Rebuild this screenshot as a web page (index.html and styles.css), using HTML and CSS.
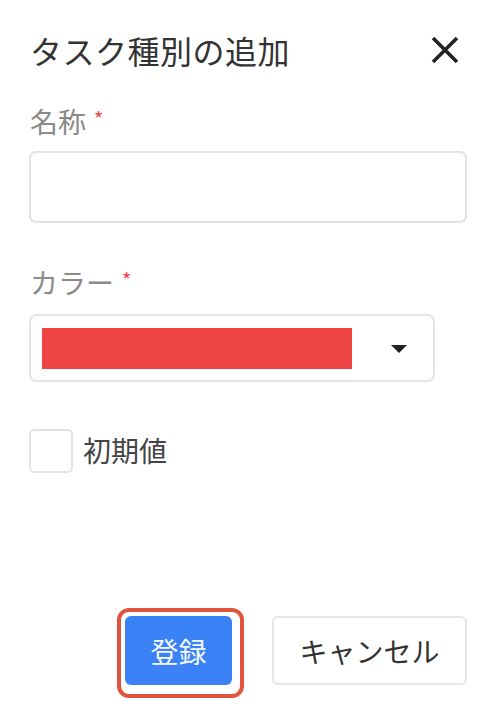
FILE: index.html
```html
<!DOCTYPE html>
<html lang="ja">
<head>
<meta charset="utf-8">
<title>タスク種別の追加</title>
<link rel="stylesheet" href="styles.css">
</head>
<body>
<div class="dialog">
  <div class="header">
    <h1 class="title">タスク種別の追加</h1>
    <button class="close" aria-label="閉じる">
      <svg width="28" height="28" viewBox="0 0 28 28"><path d="M2 2 L26 26 M26 2 L2 26" stroke="#222" stroke-width="3.6" stroke-linecap="butt"/></svg>
    </button>
  </div>

  <div class="field field-name">
    <label class="label">名称<span class="req">*</span></label>
    <input class="input" type="text">
  </div>

  <div class="field field-color">
    <label class="label">カラー<span class="req">*</span></label>
    <div class="select">
      <div class="swatch"></div>
      <svg class="caret" width="16" height="8" viewBox="0 0 16 8"><path d="M0 0 H16 L8 8 Z" fill="#222"/></svg>
    </div>
  </div>

  <div class="check-row">
    <span class="checkbox"></span>
    <span class="check-label">初期値</span>
  </div>

  <div class="actions">
    <button class="btn btn-primary">登録</button>
    <button class="btn btn-secondary">キャンセル</button>
  </div>
</div>
</body>
</html>
```
FILE: styles.css
```css
* { box-sizing: border-box; }
html, body { margin: 0; padding: 0; background: #fff; }
body {
  font-family: "Noto Sans CJK JP", "Noto Sans", sans-serif;
  width: 503px;
  height: 719px;
  overflow: hidden;
}
.dialog {
  display: flex;
  flex-direction: column;
  padding: 34px 36px 0 29px;
}
.header {
  display: flex;
  align-items: center;
  justify-content: space-between;
  height: 32px;
}
.title {
  margin: 0;
  font-size: 32px;
  line-height: 32px;
  font-weight: 400;
  color: #333;
  padding-left: 1px;
  letter-spacing: 0.5px;
}
.close {
  border: 0;
  background: none;
  padding: 0;
  margin-right: 8px;
  width: 28px;
  height: 28px;
  display: flex;
}
.field {
  display: flex;
  flex-direction: column;
}
.field-name { margin-top: 41px; }
.field-color { margin-top: 45px; }
.label {
  font-size: 28px;
  line-height: 28px;
  color: #8a8a8a;
  padding-left: 1px;
  display: flex;
  align-items: flex-start;
}
.req {
  color: #ef4444;
  font-size: 20px;
  line-height: 20px;
  margin-left: 8px;
  margin-top: 2px;
}
.input {
  margin-top: 16px;
  width: 438px;
  height: 72px;
  border: 2px solid #e4e4e4;
  border-radius: 7px;
  outline: none;
  background: #fff;
}
.select {
  margin-top: 18px;
  width: 406px;
  height: 68px;
  border: 2px solid #e4e4e4;
  border-radius: 7px;
  display: flex;
  align-items: center;
  padding: 0 26px 0 11px;
  justify-content: space-between;
}
.swatch {
  width: 310px;
  height: 41px;
  background: #ef4444;
}
.caret { margin-top: 1px; }
.check-row {
  margin-top: 47px;
  display: flex;
  align-items: center;
  gap: 10px;
}
.checkbox {
  width: 44px;
  height: 44px;
  border: 2px solid #e4e4e4;
  border-radius: 5px;
  display: block;
}
.check-label {
  font-size: 28px;
  line-height: 28px;
  color: #444;
  margin-top: -3px;
}
.actions {
  margin-top: 143px;
  display: flex;
  justify-content: flex-end;
  gap: 40px;
  padding-right: 0;
}
.btn {
  font-family: "Noto Sans CJK JP", "Noto Sans", sans-serif;
  font-size: 28px;
  line-height: 28px;
  height: 69px;
  border-radius: 6px;
  padding: 0;
  cursor: pointer;
}
.btn-primary {
  position: relative;
  width: 107px;
  background: #3b82f6;
  color: #f4f8ff;
  border: 0;
}
.btn-primary::after {
  content: "";
  position: absolute;
  left: -8px;
  top: -8px;
  right: -12px;
  bottom: -13px;
  border: 4px solid #e2533b;
  border-radius: 12px;
}
.btn-secondary {
  width: 195px;
  background: #fff;
  color: #333;
  border: 2px solid #e6e6e6;
}
```
